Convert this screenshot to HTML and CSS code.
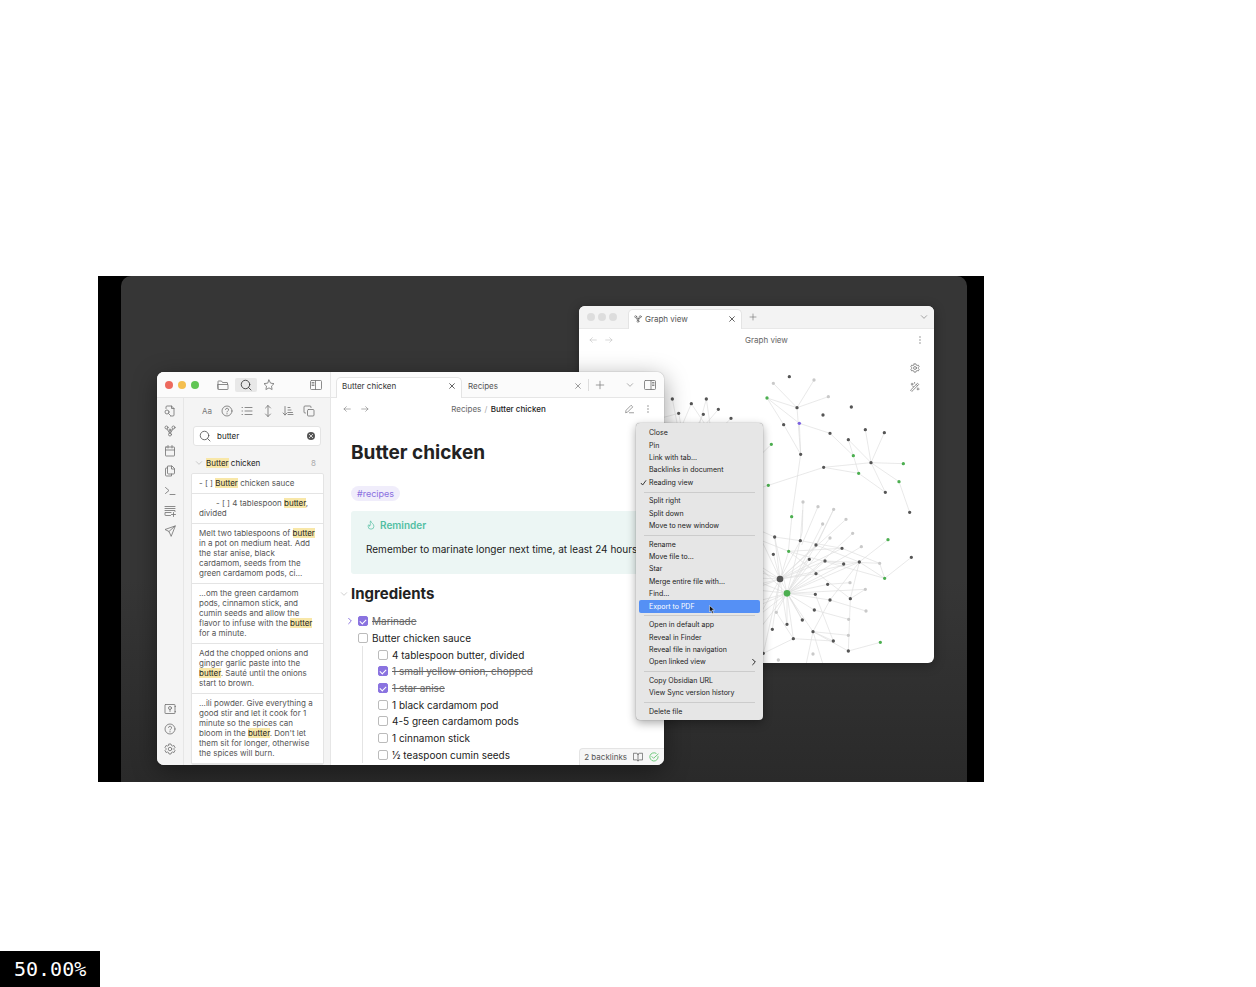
FILE: index.html
```html
<!DOCTYPE html>
<html lang="en">
<head>
<meta charset="utf-8">
<meta name="viewport" content="width=device-width, initial-scale=1">
<title>Butter chicken</title>
<link rel="stylesheet" href="styles.css">
</head>
<body>
<svg class="sprite" aria-hidden="true">
  <symbol id="folder" viewBox="0 0 24 24"><path d="M2 20V5a1 1 0 0 1 1-1h6l2 3h9a1 1 0 0 1 1 1v3M2 11h20v9a1 1 0 0 1-1 1H3a1 1 0 0 1-1-1z"/></symbol>
  <symbol id="search" viewBox="0 0 24 24"><circle cx="11" cy="11" r="8.500"/><path d="m17 17 5 5"/></symbol>
  <symbol id="star" viewBox="0 0 24 24"><path d="m12 2 3.100 6.300 6.900 1-5 4.900 1.200 6.900L12 17.800l-6.200 3.300L7 14.200 2 9.300l6.900-1z"/></symbol>
  <symbol id="panel-left" viewBox="0 0 24 24"><rect x="1" y="3" width="22" height="18" rx="2"/><path d="M11 3v18M4 7h4M4 10h4M4 13h4"/></symbol>
  <symbol id="panel-right" viewBox="0 0 24 24"><rect x="1" y="3" width="22" height="18" rx="2"/><path d="M14 3v18M17 7h3M17 10h3M17 13h3"/></symbol>
  <symbol id="file-search" viewBox="0 0 24 24"><path d="M4 7V4a2 2 0 0 1 2-2h9l5 5v13a2 2 0 0 1-2 2h-5M15 2v5h5M9 17l4 4"/><circle cx="6" cy="14" r="4"/></symbol>
  <symbol id="graph" viewBox="0 0 24 24"><circle cx="5" cy="5" r="3"/><circle cx="19" cy="5" r="3"/><circle cx="12" cy="19" r="3"/><circle cx="12" cy="10" r="2"/><path d="M6 8l5 8M18 8l-5 8M12 12v4"/></symbol>
  <symbol id="calendar" viewBox="0 0 24 24"><rect x="3" y="4" width="18" height="18" rx="1"/><path d="M3 10h18M8 1v5M16 1v5"/></symbol>
  <symbol id="files" viewBox="0 0 24 24"><path d="M8 2h8l5 5v9a2 2 0 0 1-2 2H9a2 2 0 0 1-2-2V3zM15 2v6h6M7 6H4a1 1 0 0 0-1 1v13a2 2 0 0 0 2 2h10v-4"/></symbol>
  <symbol id="terminal" viewBox="0 0 24 24"><path d="m3 5 7 6-7 6M12 19h10"/></symbol>
  <symbol id="cards" viewBox="0 0 24 24"><path d="M2 3h20M2 7h20M2 11h20v2M13 21H3a1 1 0 0 1-1-1v-5h12M19 15v8M15 19h8"/></symbol>
  <symbol id="send" viewBox="0 0 24 24"><path d="M22 2 2 9l8 4 4 9zM22 2 10 13"/></symbol>
  <symbol id="vault" viewBox="0 0 24 24"><rect x="2" y="3" width="20" height="18" rx="1"/><circle cx="12" cy="10" r="3"/><path d="M12 13v4M22 7h1M22 17h1"/></symbol>
  <symbol id="help" viewBox="0 0 24 24"><circle cx="12" cy="12" r="10"/><path d="M9 9a3 3 0 0 1 6 1c0 2-3 2-3 4M12 17v1"/></symbol>
  <symbol id="gear" viewBox="0 0 24 24"><path d="M10 2h4l1 3 2 1 3-1 2 4-2 2v2l2 2-2 4-3-1-2 1-1 3h-4l-1-3-2-1-3 1-2-4 2-2v-2L2 9l2-4 3 1 2-1z"/><circle cx="12" cy="12" r="3.500"/></symbol>
  <symbol id="list" viewBox="0 0 24 24"><path d="M8 5h14M8 12h14M8 19h14M2 5h1M2 12h1M2 19h1"/></symbol>
  <symbol id="updown" viewBox="0 0 24 24"><path d="M12 1v22M7 6l5-5 5 5M7 18l5 5 5-5"/></symbol>
  <symbol id="sort" viewBox="0 0 24 24"><path d="M6 3v17M2 16l4 4 4-4M12 5h4M12 10h6M12 15h9M12 19h10"/></symbol>
  <symbol id="copy" viewBox="0 0 24 24"><rect x="9" y="9" width="13" height="13" rx="2"/><path d="M5 16H4a2 2 0 0 1-2-2V4a2 2 0 0 1 2-2h10a2 2 0 0 1 2 2v1"/></symbol>
  <symbol id="close" viewBox="0 0 24 24"><path d="M5 5l14 14M19 5 5 19"/></symbol>
  <symbol id="plus" viewBox="0 0 24 24"><path d="M12 3v18M3 12h18"/></symbol>
  <symbol id="down" viewBox="0 0 24 24"><path d="m4 8 8 8 8-8"/></symbol>
  <symbol id="right" viewBox="0 0 24 24"><path d="m8 4 8 8-8 8"/></symbol>
  <symbol id="back" viewBox="0 0 24 24"><path d="M22 12H3M10 5l-7 7 7 7"/></symbol>
  <symbol id="forward" viewBox="0 0 24 24"><path d="M2 12h19M14 5l7 7-7 7"/></symbol>
  <symbol id="dots" viewBox="0 0 24 24"><path d="M12 3v.1M12 12v.1M12 21v.1" stroke-width="4"/></symbol>
  <symbol id="pencil" viewBox="0 0 24 24"><path d="M4 20l1-5L17 3l4 4L9 19zM13 21h10"/></symbol>
  <symbol id="flame" viewBox="0 0 24 24"><path d="M8 14c2 0 3-1 3-3 0-3-2-4 0-9 1 5 8 7 8 13a7 7 0 0 1-14 0c0-2 1-3 2-4 0 1 0 3 1 3z"/></symbol>
  <symbol id="book" viewBox="0 0 24 24"><path d="M12 6c0-2-2-3-4-3H1v16h7c2 0 4 1 4 3 0-2 2-3 4-3h7V3h-7c-2 0-4 1-4 3zM12 6v15"/></symbol>
  <symbol id="synced" viewBox="0 0 24 24"><path d="M22 11a10 10 0 1 1-5-8M7 11l4 4L22 5"/></symbol>
  <symbol id="wand" viewBox="0 0 24 24"><path d="M2 19 18 3l3 3L5 22zM15 6l3 3M5 3v5M3 5h5M19 14v5M17 17h5M11 1v2M8 11H7"/></symbol>
  <symbol id="tick" viewBox="0 0 24 24"><path d="m4 13 5 6L20 4"/></symbol>
</svg>

<main class="stage">
  <div class="desktop"></div>

  <section class="window graph-window" aria-label="Graph view">
    <header class="graph-bar">
      <span class="lights muted"><i></i><i></i><i></i></span>
      <div class="tab active graph-tab"><svg class="icon s8"><use href="#graph"/></svg><span>Graph view</span><button aria-label="Close tab"><svg class="icon s8 strong"><use href="#close"/></svg></button></div>
      <button aria-label="New tab"><svg class="icon s8"><use href="#plus"/></svg></button>
      <button class="push" aria-label="Tab list"><svg class="icon s8"><use href="#down"/></svg></button>
    </header>
    <div class="view-head graph-head">
      <button class="faint" aria-label="Back"><svg class="icon s8"><use href="#back"/></svg></button>
      <button class="faint" aria-label="Forward"><svg class="icon s8"><use href="#forward"/></svg></button>
      <span class="crumbs">Graph view</span>
      <button aria-label="More"><svg class="icon s8"><use href="#dots"/></svg></button>
    </div>
    <div class="graph-area">
      <svg class="graph" viewBox="0 0 1065 939" preserveAspectRatio="xMidYMin slice" role="img" aria-label="Note graph">
        <g class="edges">
          <path transform="translate(-27 -150)" d="M307 297 335 440M364 311 326 400M409 297 370 440M326 340 345 440M326 340 270 355M400 343 350 440M445 328 350 440M483 355 400 440M409 297 430 440M364 311 450 440"/>
          <path transform="translate(528 45)" d="M55 55 126 128 177 45M220 95 126 128 36 99 133 175 225 205 295 272 280 224 348 293 331 194M388 203 348 293 445 296M126 128 137 268 86 179 36 99M137 268 111 450 100 560M49 238-40 325M206 307 40 361-20 380M206 307 348 293 432 350 464 442M206 307 311 325 391 382 348 293M295 272 311 325M144 411 142 500 135 526M189 425 140 540M236 433 180 550M133 175 137 268"/>
          <g transform="translate(528 480)">
            <path d="M75 207 59 81M75 207 55 133M75 207 136 92M75 207 183 105M75 207 101 124M75 207 163 148M75 207 210 153M75 207 183 191M75 207 273 28M75 207 313 156M75 207 261 115M75 207 0 50M75 207-60 120M75 207-90 150M75 207-90 200M75 207-60 240M75 207-90 270M75 207 0 340M75 207 25 430M75 207 52 358M75 207 96 343M75 207 142 330"/>
            <path d="M96 250 59 81M96 250 136 92M96 250 183 105M96 250 163 148M96 250 210 153M96 250 266 162M96 250 313 156M96 250 183 191M96 250 218 223M96 250 331 238M96 250 181 253M96 250 225 270M96 250 178 300M96 250 142 330M96 250 174 365M96 250 115 386M96 250 96 343M96 250 0 160M96 250-80 180M96 250-80 230M96 250-90 330M96 250-70 380M96 250-20 400M96 250-90 300M96 250 203 42M96 250 225 84M96 250 293 70"/>
            <path d="M59 81 136 92 261 115 374 160 389 205 101 124M389 205 469 142M399 89 313 156 225 270 174 365 235 393 115 386 25 430M313 156 286 266 280 423 376 397M183 105 313 156 389 205M101 124 286 266M286 266 331 238M181 253 235 393M178 300 281 328M225 270 333 303M174 365 280 376M174 365 280 423M174 365 203 460M174 365 154 460M218 223 285 218M319 110 183 191M374 160 210 153 266 162M136 92 143 0M183 105 235 0M64 307 115 386M64 307 96 250M0 55 59 81M-10 80 101 124 261 115"/>
          </g>
        </g>
        <g class="nodes light">
          <path transform="translate(528 45)" d="M55 55h0M177 45h0M220 95h0M144 411h0M189 425h0M236 433h0"/>
          <path transform="translate(528 480)" d="M203 42h0M273 28h0M293 70h0M225 84h0M319 110h0M374 160h0M285 218h0M331 238h0M333 303h0M281 328h0M280 376h0M174 432h0M70 450h0M64 307h0"/>
        </g>
        <g class="nodes dark">
          <path transform="translate(-27 -150)" d="M307 297h0M364 311h0M409 297h0M326 340h0M400 343h0M445 328h0M483 355h0"/>
          <path transform="translate(528 45)" d="M103 35h0M126 128h0M289 126h0M204 150h0M86 179h0M225 205h0M280 224h0M331 194h0M388 203h0M137 268h0M348 293h0M206 307h0M391 382h0M464 442h0"/>
          <path transform="translate(528 480)" d="M59 81h0M136 92h0M183 105h0M261 115h0M55 133h0M163 148h0M210 153h0M266 162h0M313 156h0M183 191h0M218 223h0M181 253h0M225 270h0M286 266h0M178 300h0M142 330h0M96 343h0M52 358h0M174 365h0M115 386h0M235 393h0M280 423h0M25 430h0M469 142h0"/>
          <circle cx="603" cy="687" r="10"/>
        </g>
        <g class="nodes green">
          <path transform="translate(528 45)" d="M36 99h0M49 238h0M295 272h0M445 296h0M311 325h0M432 350h0M40 361h0"/>
          <path transform="translate(528 480)" d="M110 20h0M399 89h0M101 124h0M389 205h0M376 397h0"/>
          <circle cx="624" cy="730" r="10"/>
        </g>
        <path class="nodes purple" transform="translate(528 45)" d="M133 175h0"/>
      </svg>
      <div class="graph-tools">
        <button aria-label="Graph settings"><svg class="icon s10"><use href="#gear"/></svg></button>
        <button aria-label="Animate"><svg class="icon s10"><use href="#wand"/></svg></button>
      </div>
    </div>
  </section>

  <section class="window note-window" aria-label="Butter chicken">
    <aside class="side">
      <header class="side-bar">
        <span class="lights"><i></i><i></i><i></i></span>
        <button class="side-btn" aria-label="Files"><svg class="icon s12"><use href="#folder"/></svg></button>
        <button class="side-btn on" aria-label="Search"><svg class="icon s12"><use href="#search"/></svg></button>
        <button class="side-btn" aria-label="Starred"><svg class="icon s12"><use href="#star"/></svg></button>
        <button class="push" aria-label="Collapse sidebar"><svg class="icon s12"><use href="#panel-left"/></svg></button>
      </header>
      <div class="side-body">
        <nav class="ribbon">
          <button aria-label="Quick switcher"><svg class="icon s12"><use href="#file-search"/></svg></button>
          <button aria-label="Graph"><svg class="icon s12"><use href="#graph"/></svg></button>
          <button aria-label="Daily note"><svg class="icon s12"><use href="#calendar"/></svg></button>
          <button aria-label="Template"><svg class="icon s12"><use href="#files"/></svg></button>
          <button aria-label="Command palette"><svg class="icon s12"><use href="#terminal"/></svg></button>
          <button aria-label="Cards"><svg class="icon s12"><use href="#cards"/></svg></button>
          <button aria-label="Publish"><svg class="icon s12"><use href="#send"/></svg></button>
          <button class="push-down" aria-label="Vault"><svg class="icon s12"><use href="#vault"/></svg></button>
          <button aria-label="Help"><svg class="icon s12"><use href="#help"/></svg></button>
          <button aria-label="Settings"><svg class="icon s12"><use href="#gear"/></svg></button>
        </nav>
        <div class="search-pane">
          <div class="search-tools">
            <button>Aa</button>
            <button aria-label="Explain"><svg class="icon s12"><use href="#help"/></svg></button>
            <button aria-label="Collapse"><svg class="icon s12"><use href="#list"/></svg></button>
            <button aria-label="Context"><svg class="icon s12"><use href="#updown"/></svg></button>
            <button aria-label="Sort"><svg class="icon s12"><use href="#sort"/></svg></button>
            <button aria-label="Copy"><svg class="icon s12"><use href="#copy"/></svg></button>
          </div>
          <div class="search-box">
            <svg class="icon s12"><use href="#search"/></svg>
            <input type="text" value="butter" aria-label="Search">
            <button class="clear" aria-label="Clear"><svg class="icon s8"><use href="#close"/></svg></button>
          </div>
          <div class="result-head"><svg class="icon s8"><use href="#down"/></svg><span><mark>Butter</mark> chicken</span><small>8</small></div>
          <div class="results">
            <p>- [ ] <mark>Butter</mark> chicken sauce</p>
            <p class="nested">- [ ] 4 tablespoon <mark>butter</mark>,<br>divided</p>
            <p>Melt two tablespoons of <mark>butter</mark><br>in a pot on medium heat. Add<br>the star anise, black<br>cardamom, seeds from the<br>green cardamom pods, ci...</p>
            <p>...om the green cardamom<br>pods, cinnamon stick, and<br>cumin seeds and allow the<br>flavor to infuse with the <mark>butter</mark><br>for a minute.</p>
            <p>Add the chopped onions and<br>ginger garlic paste into the<br><mark>butter</mark>. Sauté until the onions<br>start to brown.</p>
            <p>...ili powder. Give everything a<br>good stir and let it cook for 1<br>minute so the spices can<br>bloom in the <mark>butter</mark>. Don't let<br>them sit for longer, otherwise<br>the spices will burn.</p>
          </div>
        </div>
      </div>
    </aside>

    <div class="note">
      <header class="note-bar">
        <div class="tab active"><span>Butter chicken</span><button aria-label="Close tab"><svg class="icon s8 strong"><use href="#close"/></svg></button></div>
        <div class="tab"><span>Recipes</span><button aria-label="Close tab"><svg class="icon s8"><use href="#close"/></svg></button></div>
        <button class="new-tab" aria-label="New tab"><svg class="icon s10"><use href="#plus"/></svg></button>
        <button class="push" aria-label="Tab list"><svg class="icon s8"><use href="#down"/></svg></button>
        <button aria-label="Expand sidebar"><svg class="icon s12"><use href="#panel-right"/></svg></button>
      </header>
      <div class="view-head">
        <button aria-label="Back"><svg class="icon s8"><use href="#back"/></svg></button>
        <button aria-label="Forward"><svg class="icon s8"><use href="#forward"/></svg></button>
        <span class="crumbs">Recipes <i>/</i> <b>Butter chicken</b></span>
        <button aria-label="Edit"><svg class="icon s10"><use href="#pencil"/></svg></button>
        <button aria-label="More"><svg class="icon s8"><use href="#dots"/></svg></button>
      </div>
      <article class="doc">
        <h1>Butter chicken</h1>
        <a class="tag" href="#recipes">#recipes</a>
        <div class="callout">
          <strong><svg class="icon s10"><use href="#flame"/></svg>Reminder</strong>
          <p>Remember to marinate longer next time, at least 24 hours</p>
        </div>
        <h2><svg class="icon s8"><use href="#down"/></svg>Ingredients</h2>
        <ul class="tasks">
          <li><label class="done"><svg class="icon s8 fold"><use href="#right"/></svg><input type="checkbox" checked>Marinade</label></li>
          <li class="group">
            <label><input type="checkbox">Butter chicken sauce</label>
            <ul>
              <li><label><input type="checkbox">4 tablespoon butter, divided</label></li>
              <li><label class="done"><input type="checkbox" checked>1 small yellow onion, chopped</label></li>
              <li><label class="done"><input type="checkbox" checked>1 star anise</label></li>
              <li><label><input type="checkbox">1 black cardamom pod</label></li>
              <li><label><input type="checkbox">4-5 green cardamom pods</label></li>
              <li><label><input type="checkbox">1 cinnamon stick</label></li>
              <li><label><input type="checkbox">½ teaspoon cumin seeds</label></li>
            </ul>
          </li>
        </ul>
      </article>
      <footer class="status"><span>2 backlinks</span><svg class="icon s10"><use href="#book"/></svg><svg class="icon s10 ok"><use href="#synced"/></svg></footer>
    </div>
  </section>

  <div class="menu" role="menu">
    <button role="menuitem">Close</button>
    <button role="menuitem">Pin</button>
    <button role="menuitem">Link with tab...</button>
    <button role="menuitem">Backlinks in document</button>
    <button role="menuitem" class="checked"><svg class="icon s8"><use href="#tick"/></svg>Reading view</button>
    <hr>
    <button role="menuitem">Split right</button>
    <button role="menuitem">Split down</button>
    <button role="menuitem">Move to new window</button>
    <hr>
    <button role="menuitem">Rename</button>
    <button role="menuitem">Move file to...</button>
    <button role="menuitem">Star</button>
    <button role="menuitem">Merge entire file with...</button>
    <button role="menuitem">Find...</button>
    <button role="menuitem" class="hover">Export to PDF<svg class="cursor" viewBox="0 0 12 18"><path d="M1 1v13l3-3 2.500 6 2.500-1-2.500-6H11z"/></svg></button>
    <hr>
    <button role="menuitem">Open in default app</button>
    <button role="menuitem">Reveal in Finder</button>
    <button role="menuitem">Reveal file in navigation</button>
    <button role="menuitem">Open linked view<svg class="icon s8 push"><use href="#right"/></svg></button>
    <hr>
    <button role="menuitem">Copy Obsidian URL</button>
    <button role="menuitem">View Sync version history</button>
    <hr>
    <button role="menuitem">Delete file</button>
  </div>
</main>
<output class="progress">50.00%</output>
</body>
</html>
```
FILE: styles.css
```css
* { box-sizing: border-box; }
body {
  margin: 0;
  min-height: 100vh;
  padding: 276px 272px 0 98px;
  background: #fff;
  color: #222;
  font: 8px/10px Inter, "Liberation Sans", sans-serif;
}
button { display: flex; align-items: center; justify-content: center; margin: 0; padding: 0; border: 0; background: none; color: inherit; font: inherit; }
ul, p, h1, h2 { margin: 0; padding: 0; }
ul { list-style: none; }
mark { background: #f8e7a8; color: #222; }
.sprite { position: absolute; width: 0; height: 0; }
.icon { flex: none; fill: none; stroke: currentColor; stroke-width: 1.7; stroke-linecap: round; stroke-linejoin: round; }
.s8 { width: 8px; height: 8px; }
.s10 { width: 10px; height: 10px; }
.s12 { width: 12px; height: 12px; }
.strong { color: #444; stroke-width: 2.5; }
.push { margin-left: auto; }
.push-down { margin-top: auto; }

.stage { position: relative; height: 506px; padding: 0 17px 0 23px; background: #000; overflow: hidden; }
.desktop { height: 100%; border-radius: 10px 10px 0 0; background: linear-gradient(#363636 60%, #2a2a2a); }
.window { position: absolute; display: flex; overflow: hidden; background: #fff; }

.graph-window { left: 481px; top: 30px; width: 355px; height: 357px; flex-direction: column; border-radius: 6px; box-shadow: 0 2px 12px #0005; color: #666; }
.graph-bar { display: flex; align-items: center; height: 23px; padding: 0 6px 0 8px; background: #f3f3f3; border-bottom: 1px solid #e8e8e8; }
.lights { display: flex; gap: 5px; }
.lights i { width: 8px; height: 8px; border-radius: 50%; background: #ed6a5e; }
.lights i:nth-child(2) { background: #f4bf4f; }
.lights i:nth-child(3) { background: #61c554; }
.lights.muted { gap: 3px; }
.lights.muted i { background: #ddd; }
.tab { display: flex; align-items: center; align-self: flex-end; width: 126px; height: 20px; padding: 0 6px 3px; color: #555; }
.tab button { margin-left: auto; }
.tab.active { height: 21px; margin-bottom: -1px; padding: 0 5px 4px; border: 1px solid #e4e4e4; border-bottom: 0; border-radius: 5px 5px 0 0; background: #fff; color: #333; }
.tab.graph-tab { width: 114px; height: 20px; gap: 3px; margin: 0 7px -1px 11px; padding: 0 5px 2px; }
.graph-tab.active { color: #555; }
.view-head { display: flex; align-items: center; gap: 10px; height: 22px; padding: 0 12px; color: #777; }
.crumbs { flex: 1; padding-left: 4px; text-align: center; color: #666; }
.crumbs i { margin: 0 1px; font-style: normal; color: #aaa; }
.crumbs b { color: #222; font-weight: 500; }
.graph-head { height: 21px; padding: 0 10px; gap: 8px; }
.faint { color: #bbb; }
.graph-area { position: relative; flex: 1; min-height: 0; }
.graph { display: block; width: 100%; height: 100%; fill: none; }
.edges { stroke: #dedede; stroke-width: 2; }
.nodes { stroke-width: 10; stroke-linecap: round; }
.nodes circle { stroke: none; }
.light { stroke: #c9c9c9; }
.dark { stroke: #555; }
.dark circle { fill: #555; }
.green { stroke: #4caf50; }
.green circle { fill: #4caf50; }
.purple { stroke: #7b61e0; }
.graph-tools { position: absolute; top: 13px; right: 14px; display: grid; gap: 9px; }

.note-window { left: 59px; top: 96px; width: 507px; height: 393px; border-radius: 7px; box-shadow: 0 6px 24px #0006, 0 0 1px #0008; }
.side { display: flex; flex-direction: column; width: 174px; border-right: 1px solid #e6e6e6; background: #f4f4f4; }
.side-bar { display: flex; align-items: center; height: 26px; padding: 0 8px; background: #fbfbfb; border-bottom: 1px solid #e6e6e6; color: #777; }
.side-bar .lights { margin-right: 13px; }
.side-btn { width: 22px; height: 14px; margin-right: 1px; border-radius: 2px; }
.side-btn.on { background: #e8e8e8; color: #333; }
.side-body { display: flex; flex: 1; min-height: 0; }
.ribbon { display: flex; flex-direction: column; align-items: center; gap: 8px; width: 27px; padding: 7px 0 10px; border-right: 1px solid #e6e6e6; color: #777; }
.search-pane { flex: 1; min-width: 0; padding: 7px 6px 0 7px; overflow: hidden; }
.search-tools { display: flex; justify-content: space-between; height: 12px; padding: 0 9px 0 11px; color: #777; }
.search-box { display: flex; align-items: center; gap: 6px; height: 20px; margin: 9px 3px 12px 2px; padding: 0 5px; border: 1px solid #e4e4e4; border-radius: 3px; background: #fff; color: #555; }
.search-box input { flex: 1; min-width: 0; padding: 0; border: 0; outline: 0; background: none; color: #222; font: inherit; }
.clear { width: 8px; height: 8px; border-radius: 50%; background: #555; color: #fff; }
.clear svg { width: 6px; height: 6px; stroke-width: 3; }
.result-head { display: flex; align-items: center; gap: 3px; height: 10px; margin: 0 8px 5px 4px; color: #222; }
.result-head .icon, .result-head small { color: #aaa; }
.result-head small { margin-left: auto; font-size: 8px; }
.results { border: 1px solid #e4e4e4; border-radius: 2px; background: #fff; color: #555; white-space: nowrap; }
.results p { padding: 4px 7px 5px; border-bottom: 1px solid #e4e4e4; }
.results .nested { text-indent: 17px; }

.note { position: relative; display: flex; flex: 1; flex-direction: column; min-width: 0; }
.note-bar { display: flex; align-items: center; height: 26px; padding: 0 8px 0 5px; background: #fbfbfb; border-bottom: 1px solid #e6e6e6; color: #777; }
.note-bar .push { margin-right: 10px; }
.new-tab { height: 12px; padding-left: 6px; border-left: 1px solid #ddd; }
.doc { display: flex; flex: 1; flex-direction: column; align-items: flex-start; min-height: 0; padding: 20px 20px 2px; }
h1 { font-size: 19px; line-height: 26px; font-weight: 700; }
h2 { position: relative; margin: 10px 0 9px; font-size: 15px; line-height: 20px; font-weight: 700; }
h2 .icon { position: absolute; left: -11px; top: 6px; color: #aaa; }
.tag { margin: 20px 0 10px; padding: 2px 6px; border-radius: 8px; background: #f0edfb; color: #8a6fe0; font-size: 9px; line-height: 11px; text-decoration: none; }
.callout { align-self: stretch; height: 63px; padding: 8px 15px; border-radius: 3px; background: #ecf6f4; font-size: 10px; line-height: 12px; white-space: nowrap; }
.callout strong { display: flex; align-items: center; gap: 4px; margin-bottom: 12px; color: #53bfa3; font-weight: 600; }
.tasks { display: flex; flex: 1; flex-direction: column; align-self: stretch; font-size: 10px; padding-left: 7px; }
.tasks li { display: flex; flex: 1 1 0; align-items: center; }
.tasks label { position: relative; display: flex; align-items: center; gap: 4px; }
.tasks .group { flex: 8 1 0; flex-direction: column; align-items: stretch; }
.group > label { flex: 1 1 0; }
.group ul { display: flex; flex: 7 1 0; flex-direction: column; margin-left: 4px; padding-left: 15px; border-left: 1px solid #e4e4e4; }
.tasks input { appearance: none; width: 10px; height: 10px; margin: 0; border: 1px solid #bbb; border-radius: 2px; background: #fff; }
.tasks input:checked { display: grid; place-items: center; border-color: #8a73e0; background: #8a73e0; }
.tasks input:checked::after { content: ""; width: 5px; height: 3px; border: solid #fff; border-width: 0 0 1px 1px; transform: rotate(-45deg); }
.tasks .done { color: #666; text-decoration: line-through; }
.fold { position: absolute; left: -12px; top: 1px; color: #8a73e0; stroke-width: 3; }
.status { position: absolute; right: 0; bottom: 0; display: flex; align-items: center; gap: 6px; height: 17px; padding: 0 5px 0 4px; border: 1px solid #e4e4e4; border-width: 1px 0 0 1px; border-radius: 4px 0 0 0; background: #f6f6f6; color: #555; }
.ok { color: #3fb94f; }

.menu { position: absolute; left: 538px; top: 147px; display: flex; flex-direction: column; width: 127px; height: 297px; padding: 4px 3px 2px; border-radius: 4px; background: #e6e6e6; box-shadow: 0 0 1px #0008, 0 3px 10px #0005; color: #222; font-size: 7px; }
.menu button { position: relative; flex: 2 1 0; min-height: 0; justify-content: flex-start; padding: 0 2px 0 10px; border-radius: 2px; white-space: nowrap; }
.menu hr { flex: 1 1 0; width: 111px; margin: 0 auto; border: 0; background: linear-gradient(#ccc, #ccc) center / 100% 1px no-repeat; }
.menu .hover { background: #5590f5; color: #fff; }
.menu .icon { stroke-width: 3; }
.checked .icon { position: absolute; left: 1px; width: 7px; }
.cursor { position: absolute; left: 70px; top: 5px; z-index: 1; width: 6px; height: 9px; fill: #111; stroke: #fff; }

.progress { position: fixed; left: 0; bottom: 0; padding: 6px 14px; background: #000; color: #fff; font: 20px/24px "DejaVu Sans Mono", monospace; }
```
